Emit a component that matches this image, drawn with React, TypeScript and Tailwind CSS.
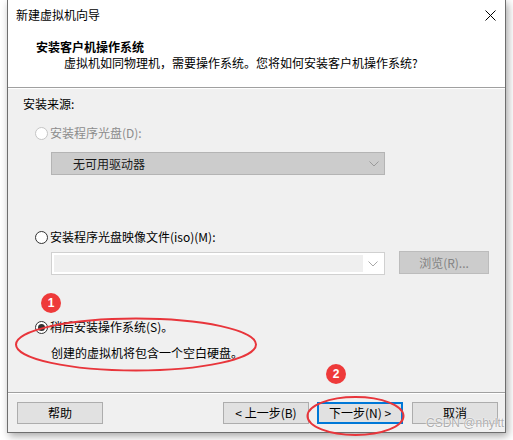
import React from "react";

const font = { fontFamily: '"Noto Sans CJK SC", "Noto Sans", sans-serif' };

function Radio({ state }: { state: "disabled" | "off" | "on" }) {
  const border = state === "disabled" ? "#c4c4c4" : "#333333";
  return (
    <svg width="13" height="13" viewBox="0 0 13 13" className="shrink-0">
      <circle cx="6.5" cy="6.5" r="6" fill="#ffffff" stroke={border} strokeWidth="1" />
      {state === "on" && <circle cx="6.5" cy="6.5" r="3.5" fill="#333333" />}
    </svg>
  );
}

function Chevron({ color }: { color: string }) {
  return (
    <svg width="10" height="6" viewBox="0 0 10 6">
      <path d="M0.5 0.5 L5 5 L9.5 0.5" fill="none" stroke={color} strokeWidth="1" />
    </svg>
  );
}

function Btn({ children, primary, className }: { children: React.ReactNode; primary?: boolean; className?: string }) {
  return (
    <div
      className={
        "w-[86px] h-[22px] flex items-center justify-center text-[12px] text-black bg-[#e1e1e1] " +
        (primary ? "border-2 border-[#0078d7] " : "border border-[#adadad] ") +
        (className ?? "")
      }
    >
      {children}
    </div>
  );
}

export default function App() {
  return (
    <div className="relative w-[513px] h-[440px] bg-white overflow-hidden pl-[7px]" style={font}>
      <div className="relative w-[499px] h-[433px] border-x border-b border-[#6e6e6e] bg-[#f0f0f0] flex flex-col shadow-[2px_3px_8px_rgba(0,0,0,0.35)]">
        {/* title bar */}
        <div className="h-[30px] bg-white flex items-center justify-between pl-[8px] pr-[9px]">
          <span className="text-[12px] text-black leading-none">新建虚拟机向导</span>
          <svg width="11" height="11" viewBox="0 0 11 11">
            <path d="M0.5 0.5 L10.5 10.5 M10.5 0.5 L0.5 10.5" stroke="#000" strokeWidth="1" />
          </svg>
        </div>
        {/* header */}
        <div className="h-[57px] bg-white flex flex-col pl-[28px] pt-[8px]">
          <div className="text-[12px] font-bold leading-[18px] text-black">安装客户机操作系统</div>
          <div className="text-[12px] leading-[16px] text-black pl-[28px] -mt-[1px]">
            虚拟机如同物理机，需要操作系统。您将如何安装客户机操作系统?
          </div>
        </div>
        <div className="h-px bg-[#a0a0a0]" />
        <div className="h-px bg-white" />
        {/* body */}
        <div className="flex-1 flex flex-col pl-[15px] text-[12px] text-black">
          <div className="mt-[6px] leading-[18px] h-[18px]">安装来源:</div>
          <div className="mt-[11px] h-[18px] flex items-center pl-[12px] gap-[2px]">
            <Radio state="disabled" />
            <span className="text-[#8c8c8c] leading-[18px]">安装程序光盘(D):</span>
          </div>
          <div className="mt-[10px] ml-[28px] w-[334px] h-[23px] bg-[#cccccc] border border-[#b4b4b4] flex items-center justify-between pl-[21px] pr-[5px]">
            <span className="text-[#1a1a1a]">无可用驱动器</span>
            <Chevron color="#9a9a9a" />
          </div>
          <div className="mt-[53px] h-[18px] flex items-center pl-[12px] gap-[2px]">
            <Radio state="off" />
            <span className="leading-[18px]">安装程序光盘映像文件(iso)(M):</span>
          </div>
          <div className="mt-[5px] h-[23px] flex items-start">
            <div className="mt-px ml-[28px] w-[334px] h-[23px] border border-[#d0d0d0] bg-white p-[2px] flex items-center">
              <div className="h-full w-[309px] bg-[#efefef]" />
              <div className="flex-1 flex justify-center">
                <Chevron color="#a8a8a8" />
              </div>
            </div>
            <div className="ml-[14px] w-[90px] h-[23px] bg-[#cccccc] border border-[#bcbcbc] flex items-center justify-center text-[#838383]">
              浏览(R)...
            </div>
          </div>
          <div className="mt-[44px] h-[18px] flex items-center pl-[12px] gap-[2px]">
            <Radio state="on" />
            <span className="leading-[18px]">稍后安装操作系统(S)。</span>
          </div>
          <div className="mt-[8px] h-[18px] leading-[18px] pl-[28px]">创建的虚拟机将包含一个空白硬盘。</div>
        </div>
        <div className="h-px bg-[#a0a0a0]" />
        <div className="h-px bg-white" />
        {/* footer */}
        <div className="h-[38px] flex items-start pt-[8px] pl-[9px]">
          <Btn>帮助</Btn>
          <Btn className="ml-[120px]">&lt; 上一步(B)</Btn>
          <Btn primary className="ml-[8px]">下一步(N) &gt;</Btn>
          <Btn className="ml-[9px]">取消</Btn>
        </div>
      </div>

      {/* annotations */}
      <svg className="absolute left-0 top-0 pointer-events-none" width="513" height="440" viewBox="0 0 513 440">
        <ellipse cx="136" cy="344.5" rx="120" ry="26" fill="none" stroke="#e8353b" strokeWidth="2" />
        <ellipse cx="355.5" cy="416" rx="48" ry="19" fill="none" stroke="#e8353b" strokeWidth="2" />
      </svg>
      <div className="absolute left-[41px] top-[293px] w-[20px] h-[20px] rounded-full bg-[#ee3a3a] text-white text-[12px] font-bold flex items-center justify-center" style={{ fontFamily: '"Liberation Sans", sans-serif' }}>
        1
      </div>
      <div className="absolute left-[326px] top-[364px] w-[20px] h-[20px] rounded-full bg-[#ee3a3a] text-white text-[12px] font-bold flex items-center justify-center" style={{ fontFamily: '"Liberation Sans", sans-serif' }}>
        2
      </div>
      <div
        className="absolute left-[426px] top-[417px] text-[12px] text-[#9a9a9a]/80 leading-none"
        style={{ fontFamily: '"Liberation Sans", sans-serif', textShadow: "0 0 2px #fff, 0 0 1px #fff" }}
      >
        CSDN @nhyltt
      </div>
    </div>
  );
}
